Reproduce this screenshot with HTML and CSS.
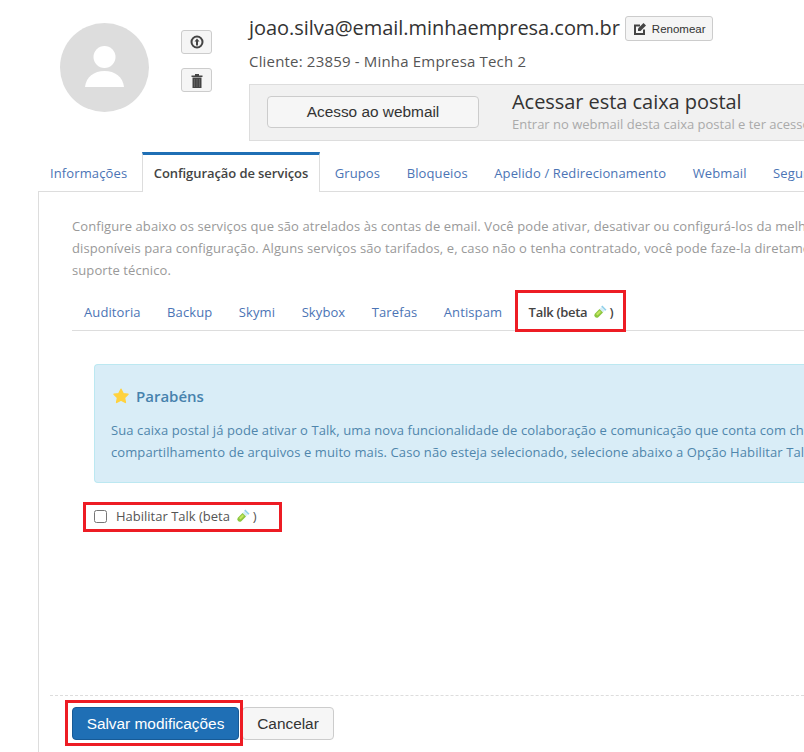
FILE: index.html
```html
<!DOCTYPE html>
<html lang="pt-BR">
<head>
<meta charset="utf-8">
<title>Caixa postal</title>
<link rel="stylesheet" href="styles.css">
</head>
<body>
<div class="page">
  <header class="head">
    <div class="avatar">
      <svg viewBox="0 0 89 89" width="89" height="89"><circle cx="44.500" cy="44.500" r="44.500" fill="#dddddd"/><circle cx="44.500" cy="34" r="11" fill="#fff"/><path d="M25 64c1-10 9-16 19.500-16S63 54 64 64z" fill="#fff"/></svg>
    </div>
    <div class="avatar-actions">
      <button class="icon-btn" type="button"><svg viewBox="0 0 14 14" width="14" height="14"><circle cx="7" cy="7" r="5.500" fill="none" stroke="#444" stroke-width="2"/><path d="M7 3.500 4.500 6.500H6V10.500H8V6.500H9.500z" fill="#444"/></svg></button>
      <button class="icon-btn" type="button"><svg viewBox="0 0 14 15" width="14" height="15"><path d="M1.500 2.500H5V1H9V2.500H12.500V4H1.500z" fill="#444"/><path d="M2.500 4.500H11.500V15H2.500z" fill="#444"/><path d="M4.500 6V14M7 6V14M9.500 6V14" stroke="#6a6a6a" stroke-width=".8"/></svg></button>
    </div>
    <div class="account">
      <div class="title-row">
        <h1 class="email">joao.silva@email.minhaempresa.com.br</h1>
        <button class="rename" type="button"><svg viewBox="0 0 14 14" width="14" height="14"><path d="M11 7.500V12H2V3.500H7" fill="none" stroke="#444" stroke-width="2"/><path d="M5 6.500 10.500 1 13 3.500 7.500 9H5z" fill="#444"/></svg>Renomear</button>
      </div>
      <p class="client">Cliente: 23859 - Minha Empresa Tech 2</p>
      <div class="webmail">
        <button class="webmail-btn" type="button">Acesso ao webmail</button>
        <div>
          <h2 class="webmail-title">Acessar esta caixa postal</h2>
          <p class="webmail-sub">Entrar no webmail desta caixa postal e ter acesso a todas as mensagens</p>
        </div>
      </div>
    </div>
  </header>

  <nav class="tabs">
    <a class="tab">Informações</a>
    <a class="tab active">Configuração de serviços</a>
    <a class="tab">Grupos</a>
    <a class="tab">Bloqueios</a>
    <a class="tab">Apelido / Redirecionamento</a>
    <a class="tab">Webmail</a>
    <a class="tab">Segurança</a>
  </nav>

  <main class="panel">
    <p class="intro">Configure abaixo os serviços que são atrelados às contas de email. Você pode ativar, desativar ou configurá-los da melhor forma<br>disponíveis para configuração. Alguns serviços são tarifados, e, caso não o tenha contratado, você pode faze-la diretamente com o<br>suporte técnico.</p>

    <nav class="subtabs">
      <a class="subtab">Auditoria</a>
      <a class="subtab">Backup</a>
      <a class="subtab">Skymi</a>
      <a class="subtab">Skybox</a>
      <a class="subtab">Tarefas</a>
      <a class="subtab">Antispam</a>
      <a class="subtab current">Talk (beta <svg class="tube" viewBox="0 0 14 14" width="14" height="14"><path d="M9.300 .5 13.500 4.700 12.300 5.800 8.200 1.700z" fill="#8fd0ea"/><path d="M8.500 2 12 5.500 10 7.500 6.500 4z" fill="#d5edf7"/><path d="M6.500 4 10 7.500 5.300 12.200a2.500 2.500 0 0 1-3.500-3.500z" fill="#8cc63f"/><path d="M6.500 5.500 8 7 4.500 10.500 3 9z" fill="#c4e660"/></svg> )<span class="mark mark-tab"></span></a>
    </nav>

    <section class="alert">
      <h3 class="alert-title"><svg viewBox="0 0 16 16" width="16" height="16"><path d="M8 1.200 10.200 5.600 15 6.300 11.500 9.700 12.400 14.500 8 12.200 3.600 14.500 4.500 9.700 1 6.300 5.800 5.600z" fill="#ffd23e" stroke="#ffd23e" stroke-width="1.400" stroke-linejoin="round"/></svg>Parabéns</h3>
      <p class="alert-text">Sua caixa postal já pode ativar o Talk, uma nova funcionalidade de colaboração e comunicação que conta com chat, videoconferência,<br>compartilhamento de arquivos e muito mais. Caso não esteja selecionado, selecione abaixo a Opção Habilitar Talk (beta) e salve.</p>
    </section>

    <label class="check">
      <input type="checkbox">
      <span>Habilitar Talk (beta <svg class="tube" viewBox="0 0 14 14" width="14" height="14"><path d="M9.300 .5 13.500 4.700 12.300 5.800 8.200 1.700z" fill="#8fd0ea"/><path d="M8.500 2 12 5.500 10 7.500 6.500 4z" fill="#d5edf7"/><path d="M6.500 4 10 7.500 5.300 12.200a2.500 2.500 0 0 1-3.500-3.500z" fill="#8cc63f"/><path d="M6.500 5.500 8 7 4.500 10.500 3 9z" fill="#c4e660"/></svg> )</span>
      <span class="mark mark-check"></span>
    </label>

    <footer class="actions">
      <button class="save" type="button">Salvar modificações<span class="mark mark-save"></span></button>
      <button class="cancel" type="button">Cancelar</button>
    </footer>
  </main>
</div>
</body>
</html>
```
FILE: styles.css
```css
* { box-sizing: border-box; }
html, body { margin: 0; padding: 0; background: #fff; }
body { width: 804px; height: 752px; overflow: hidden; font-family: "Open Sans", sans-serif; font-size: 13px; color: #555; }
p, h1, h2, h3 { margin: 0; font-weight: normal; }
button { font-family: "Liberation Sans", sans-serif; cursor: pointer; }
.page { width: 804px; height: 752px; overflow: hidden; display: flex; flex-direction: column; }

.head { display: flex; height: 152px; padding: 0 0 0 60px; flex: none; }
.avatar { width: 89px; height: 89px; margin-top: 23px; flex: none; }
.avatar svg { display: block; }
.avatar-actions { display: flex; flex-direction: column; gap: 14px; margin: 30px 0 0 32px; flex: none; }
.icon-btn { width: 31px; height: 24px; padding: 0; display: flex; align-items: center; justify-content: center; background: #f5f5f5; border: 1px solid #ccc; border-radius: 3px; }
.account { margin-left: 37px; padding-top: 16px; flex: none; width: 555px; }
.title-row { display: flex; align-items: center; height: 25px; white-space: nowrap; }
.email { font-size: 20px; line-height: 25px; margin-bottom: 3px; letter-spacing: -.05px; color: #333; }
.rename { margin-left: 5px; width: 88px; height: 25px; padding: 0 0 0 7px; display: flex; align-items: center; gap: 5px; font-size: 11.500px; color: #333; background: #f5f5f5; border: 1px solid #ccc; border-radius: 3px; }
.client { margin-top: 10px; font-size: 15px; letter-spacing: .18px; line-height: 20px; color: #555; white-space: nowrap; }
.webmail { display: flex; align-items: flex-start; margin-top: 13px; height: 57px; padding: 11px 0 0 17px; background: #f1f1f1; border: 1px solid #ddd; border-width: 1px 0 1px 1px; white-space: nowrap; overflow: hidden; }
.webmail-btn { width: 212px; height: 32px; flex: none; font-size: 15.400px; color: #333; background: #f6f6f6; border: 1px solid #ccc; border-radius: 4px; margin-right: 33px; }
.webmail-title { margin-top: -7px; font-size: 20px; line-height: 26px; font-weight: 500; letter-spacing: -.05px; color: #333; }
.webmail-sub { font-size: 13px; line-height: 18px; color: #aaa; }

.tabs { display: flex; gap: 2.500px; height: 40px; margin-left: 38px; flex: none; white-space: nowrap; border-bottom: 1px solid #ddd; }
.tab { display: block; height: 40px; padding: 10px 12px 0; line-height: 22px; letter-spacing: .12px; color: #4b74b5; }
.tab.active { padding: 7px 11px 0; font-weight: 600; letter-spacing: -.08px; color: #444; background: #fff; border: 1px solid #ddd; border-top: 3px solid #1f6fb5; border-bottom: 0; }

.panel { flex: 1; min-height: 0; position: relative; margin-left: 38px; padding: 23px 0 0 33px; border-left: 1px solid #ddd; display: flex; flex-direction: column; white-space: nowrap; }
.intro { line-height: 22px; letter-spacing: .09px; color: #999; }
.subtabs { display: flex; gap: 2.500px; height: 41px; margin-top: 9px; flex: none; border-bottom: 1px solid #ddd; }
.subtab { position: relative; padding: 11px 12px 0; line-height: 22px; letter-spacing: .1px; color: #4b74b5; }
.subtab.current { color: #444; font-weight: 600; letter-spacing: -.3px; }
.tube { vertical-align: -2px; margin: 0 -1px 0 3px; }

.alert { margin: 33px 0 0 22px; height: 119px; flex: none; padding: 19px 16px; background: #d9edf7; border: 1px solid #bce8f1; border-right: 0; border-radius: 4px 0 0 4px; color: #4f86ac; }
.alert-title { display: flex; align-items: center; gap: 7px; margin-left: 2px; height: 24px; font-size: 15px; font-weight: 600; color: #4682ad; }
.alert-text { margin-top: 11px; line-height: 22px; letter-spacing: .09px; }

.check { position: relative; display: flex; align-items: center; height: 22px; margin: 22px 0 0 22px; flex: none; color: #555; }
.check input { width: 13px; height: 13px; margin: 0 9px 0 0; }

.actions { display: flex; align-items: center; margin: 168px 0 0 -22px; padding: 11px 0 0 22px; border-top: 1px dashed #ddd; flex: none; }
.save { position: relative; width: 167px; height: 33px; font-size: 15.400px; color: #fff; background: #1f6fb5; border: 1px solid #175a96; border-radius: 4px; padding: 0; }
.cancel { width: 92px; height: 33px; margin-left: 3px; font-size: 15.400px; color: #333; background: #f6f6f6; border: 1px solid #ccc; border-radius: 4px; padding: 0; }

.mark { position: absolute; border: 3px solid #ed1c24; pointer-events: none; }
.mark-tab { left: -2px; top: 0; width: 111px; height: 42px; }
.mark-check { left: -11px; top: -3px; width: 199px; height: 30px; }
.mark-save { left: -8px; top: -8px; width: 178px; height: 46px; }
```
